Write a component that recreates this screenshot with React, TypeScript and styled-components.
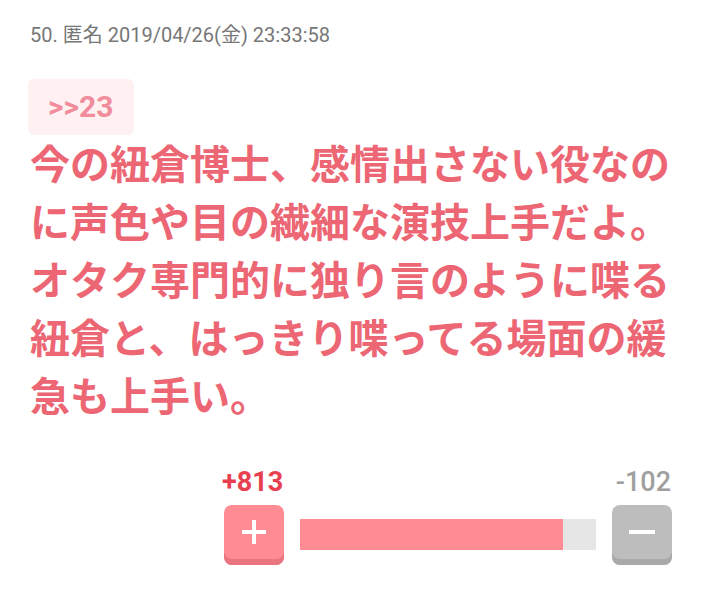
import styled, { createGlobalStyle } from "styled-components";

const GlobalStyle = createGlobalStyle`
  html, body {
    margin: 0;
    padding: 0;
    background: #ffffff;
  }
  body {
    font-family: Roboto, "Noto Sans CJK JP", sans-serif;
  }
`;

const Post = styled.div`
  padding: 22px 48px 0 30px;
  width: 720px;
  box-sizing: border-box;
`;

const Meta = styled.div`
  font-size: 20px;
  line-height: 26px;
  color: #777777;
`;

const Anchor = styled.div`
  display: inline-block;
  margin: 31px 0 0 -2px;
  padding: 0 21px 0 20px;
  height: 56px;
  line-height: 56px;
  border-radius: 6px;
  background: #fff0f2;
  color: #f08c9b;
  font-size: 30px;
  font-weight: 700;
`;

const Body = styled.div`
  font-family: "Noto Sans CJK JP", sans-serif;
  font-size: 40px;
  line-height: 58px;
  font-weight: 700;
  color: #ec6674;
  width: 642px;
  margin-top: -2px;
`;

const Vote = styled.div`
  display: flex;
  justify-content: flex-end;
  margin-top: 43px;
`;

const VoteBox = styled.div`
  width: 450px;
  display: flex;
  flex-direction: column;
`;

const Counts = styled.div`
  display: flex;
  justify-content: space-between;
  font-size: 27px;
  line-height: 32px;
  padding-right: 1px;
`;

const Count = styled.span<{ $good?: boolean }>`
  color: ${(p) => (p.$good ? "#e8404f" : "#a0a0a0")};
  font-weight: ${(p) => (p.$good ? 700 : 500)};
`;

const Controls = styled.div`
  display: flex;
  align-items: flex-start;
  gap: 16px;
  margin-top: 7px;
  padding-left: 2px;
`;

const VoteButton = styled.button<{ $good?: boolean }>`
  flex: none;
  width: 60px;
  height: 60px;
  padding: 0 0 6px;
  border: none;
  border-radius: 8px;
  display: flex;
  align-items: center;
  justify-content: center;
  background: ${(p) => (p.$good ? "#ff8b95" : "#bdbdbd")};
  box-shadow: inset 0 -6px 0 ${(p) => (p.$good ? "#e87580" : "#a9a9a9")};
  cursor: pointer;
`;

const Track = styled.div`
  flex: 1;
  height: 31px;
  margin-top: 14px;
  background: #e6e6e6;
  display: flex;
`;

const Fill = styled.div`
  height: 100%;
  background: #ff8b95;
`;

const good = 813;
const bad = 102;

export default function App() {
  const ratio = (good / (good + bad)) * 100;
  return (
    <>
      <GlobalStyle />
      <Post>
        <Meta>50. 匿名 2019/04/26(金) 23:33:58</Meta>
        <Anchor>&gt;&gt;23</Anchor>
        <Body>
          今の紐倉博士、感情出さない役なのに声色や目の繊細な演技上手だよ。オタク専門的に独り言のように喋る紐倉と、はっきり喋ってる場面の緩急も上手い。
        </Body>
        <Vote>
          <VoteBox>
            <Counts>
              <Count $good>+{good}</Count>
              <Count>-{bad}</Count>
            </Counts>
            <Controls>
              <VoteButton $good aria-label="plus">
                <svg width="28" height="28" viewBox="0 0 28 28">
                  <path d="M14 2v24M2 14h24" stroke="#fff" strokeWidth="4" />
                </svg>
              </VoteButton>
              <Track>
                <Fill style={{ width: `${ratio}%` }} />
              </Track>
              <VoteButton aria-label="minus">
                <svg width="28" height="28" viewBox="0 0 28 28">
                  <path d="M1 14h26" stroke="#fff" strokeWidth="4" />
                </svg>
              </VoteButton>
            </Controls>
          </VoteBox>
        </Vote>
      </Post>
    </>
  );
}
